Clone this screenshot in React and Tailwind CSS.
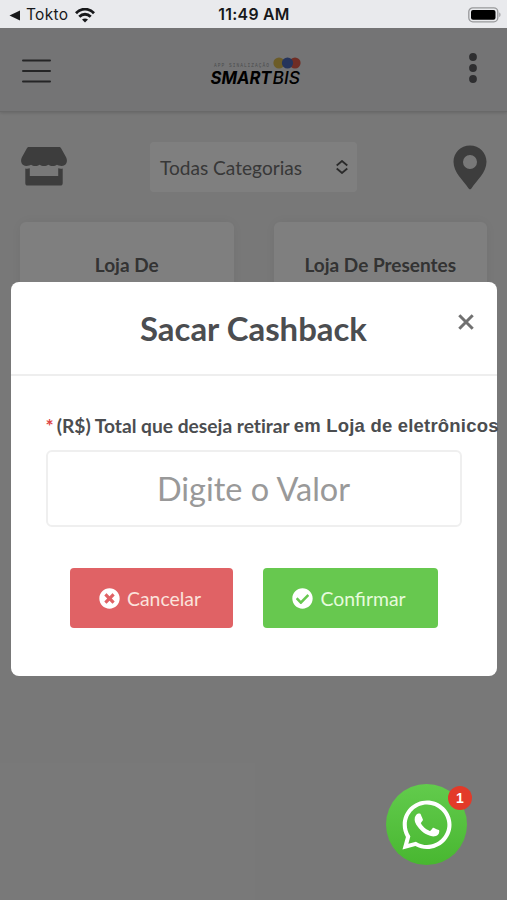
import { useState } from 'react';
import { FaCheckCircle, FaTimesCircle, FaWhatsapp } from 'react-icons/fa';

function StatusBar() {
  return (
    <div className="relative z-20 flex h-7 items-center bg-[#e9eaed] pt-0.5 font-['Inter',sans-serif] text-[#17181a]">
      <div className="flex flex-1 items-center pl-[9px]">
        <svg className="h-[11px] w-[11px]" viewBox="0 0 11 11">
          <path d="M0.5 5.5 11 0.5v10z" fill="#17181a" />
        </svg>
        <span className="ml-1.5 text-[15.5px] tracking-[0.3px]">Tokto</span>
        <svg className="ml-[7px] h-[15px] w-5" viewBox="0 0 20 15" fill="none" stroke="#17181a" strokeWidth="2.8">
          <path d="M1 5.2C6-0.2 14-0.2 19 5.2" />
          <path d="M4.3 8.8c3.3-3.4 8.1-3.4 11.4 0" />
          <path d="M10 14.6 7 11.6c1.7-1.6 4.3-1.6 6 0z" fill="#17181a" stroke="none" />
        </svg>
      </div>
      <span className="mr-0.5 text-[15.8px] font-semibold tracking-[0.3px]">11:49 AM</span>
      <div className="flex flex-1 justify-end pr-[6px]">
        <svg className="h-4 w-[33px]" viewBox="0 0 33 16">
          <rect x="0.8" y="0.8" width="29" height="14" rx="4" fill="none" stroke="#98999b" strokeWidth="1.3" />
          <rect x="3" y="3" width="24.5" height="9.8" rx="2" fill="#000" />
          <path d="M31.3 5.5v4.6c1.6-.5 1.6-4.1 0-4.6z" fill="#98999b" />
        </svg>
      </div>
    </div>
  );
}

function Logo() {
  return (
    <svg className="mt-1.5 mr-2 h-[38px] w-[92px] overflow-visible" viewBox="0 0 92 38">
      <text x="4" y="12.5" fontSize="4.5" fill="#98999b" fontFamily="Liberation Mono, monospace" textLength="55">APP SINALIZAÇÃO</text>
      <circle cx="69" cy="9" r="5.6" fill="#d8b850" />
      <circle cx="85" cy="9" r="5.6" fill="#e05a48" />
      <circle cx="77.500" cy="9" r="5.6" fill="#4a68b8" />
      <g fontFamily="Inter, sans-serif" fontStyle="italic" fontSize="17.5" fill="#000">
        <text x="0.5" y="30" fontWeight="700" textLength="61" lengthAdjust="spacingAndGlyphs">SMART</text>
        <text x="62.5" y="30" fontWeight="500" textLength="27.500" lengthAdjust="spacingAndGlyphs">BIS</text>
      </g>
    </svg>
  );
}

function StoreIcon() {
  return (
    <svg className="-mt-0.5 h-[39px] w-[46px]" viewBox="0 0 46 39" fill="#7a7a7a">
      <path d="M8 0h30c1 0 1.6.4 2.1 1.2l5 9c1 2 .9 4 .6 5-.6 2.500-2.700 3.800-5.200 3.800-2 0-3.300-.5-4.500-1.200-1.200.8-2.500 1.200-4.300 1.200s-3.100-.4-4.300-1.200C26.200 18.600 24.800 19 23 19s-3.200-.4-4.400-1.200c-1.200.8-2.500 1.200-4.300 1.200s-3.100-.4-4.300-1.200C8.800 18.500 7.500 19 5.500 19 3 19 .9 17.700.3 15.200c-.3-1-.4-3 .6-5l5-9C6.400.4 7 0 8 0z" />
      <path d="M4.300 21.500c1.500.3 3 .2 4.500-.2v7.700h28.400v-7.700c1.500.4 3 .5 4.500.2v14.700c0 1.400-.9 2.300-2.300 2.300H6.600c-1.400 0-2.300-.9-2.300-2.300z" />
    </svg>
  );
}

function PinIcon() {
  return (
    <svg className="h-[45px] w-[34px]" viewBox="0 0 34 45" fill="#7a7a7a">
      <path fillRule="evenodd" d="M17 .5C7.600.5.500 7.800.500 16.800.500 27.500 10 35 15.600 43.600c.7 1.100 2.100 1.100 2.800 0C24 35 33.500 27.500 33.500 16.800 33.500 7.800 26.400.5 17 .5zm0 9.500a7 7 0 1 1 0 14 7 7 0 0 1 0-14z" />
    </svg>
  );
}

function Store({ name }) {
  return (
    <div className="h-[260px] rounded-md bg-white pt-[29px] text-center text-[19px] font-bold text-[#666] shadow-[0_0_14px_rgba(0,0,0,0.06)]">
      {name}
    </div>
  );
}

function CashbackModal({ onClose }) {
  const [valor, setValor] = useState('');

  return (
    <div className="h-[394px] w-[486px] rounded-lg bg-white text-[#4b4d50]">
      <div className="relative flex h-[94px] items-center justify-center border-b-2 border-[#eeeeee]">
        <h2 className="pt-px text-[32.9px] font-bold">Sacar Cashback</h2>
        <button onClick={onClose} className="absolute top-[32px] right-[23px]">
          <svg className="h-4 w-4" viewBox="0 0 16 16" stroke="#707070" strokeWidth="3">
            <path d="M1.300 1.300l13.400 13.400M14.700 1.300 1.300 14.700" />
          </svg>
        </button>
      </div>
      <div className="px-[35px] pt-[38px]">
        <label className="flex h-6 items-center text-[19.2px] font-bold whitespace-nowrap [font-variant-ligatures:none]">
          <span className="mr-[3px] text-[#dd4545]">*</span>
          <span>(R$) Total que deseja retirar</span>
          <span className="ml-[4px] font-['Liberation_Sans',sans-serif] text-[18.500px] tracking-[0.2px]">em Loja de eletrônicos</span>
        </label>
        <input
          className="mt-[12px] block h-[77px] w-[416px] rounded-md border-2 border-[#efefef] text-center text-[32.5px] placeholder:text-[#999] focus:outline-none"
          placeholder="Digite o Valor"
          value={valor}
          onChange={e => setValor(e.target.value)}
        />
        <div className="mt-[41px] flex gap-[30px] pl-6">
          <button onClick={onClose} className="flex h-[60px] w-[163px] items-center justify-center gap-[7px] rounded bg-[#e06265] pt-px pr-0.5 text-[19.4px] text-[#fbe3dc]">
            <FaTimesCircle className="text-[21px] text-white" />
            Cancelar
          </button>
          <button className="flex h-[60px] w-[175px] items-center justify-center gap-[7px] rounded bg-[#67c84f] pt-px pr-0.5 text-[19.4px] text-[#e6fbdc]">
            <FaCheckCircle className="text-[21px] text-white" />
            Confirmar
          </button>
        </div>
      </div>
    </div>
  );
}

function App() {
  const [open, setOpen] = useState(true);

  return (
    <div className="relative h-[900px] w-[507px] overflow-hidden bg-[#f1f1f1] font-['Lato',sans-serif]">
      <StatusBar />

      <header className="flex h-[84px] items-center justify-between border-b border-[#d2d2d2] bg-[#e8e9eb] pr-[30px] pl-[22px] shadow-[0_1px_3px_rgba(0,0,0,0.15)]">
        <svg className="mt-0.5 h-6 w-[29px]" viewBox="0 0 29 24" stroke="#4a4a4d" strokeWidth="2" strokeLinecap="round">
          <path d="M1 1.500h27M1 12h27M1 22.500h27" />
        </svg>
        <Logo />
        <svg className="-mt-1 h-[30px] w-2" viewBox="0 0 8 30" fill="#5c5c60">
          <circle cx="4" cy="4" r="3.900" />
          <circle cx="4" cy="15" r="3.900" />
          <circle cx="4" cy="26" r="3.900" />
        </svg>
      </header>

      <div className="flex items-center justify-between pt-[30px] pr-5 pl-[21px]">
        <StoreIcon />
        <div className="mr-[13px] flex h-[50px] w-[207px] items-center justify-between rounded-sm bg-white pt-0.5 pr-[9px] pl-[10px] text-[19.1px] text-[#707070]">
          <span>Todas Categorias</span>
          <svg className="-mt-0.5 h-3.5 w-3" viewBox="0 0 12 14" fill="none" stroke="#555" strokeWidth="1.800">
            <path d="M.7 5.500 6 1l5.300 4.500M.7 8.500 6 13l5.300-4.500" />
          </svg>
        </div>
        <PinIcon />
      </div>

      <div className="grid grid-cols-2 gap-10 px-5 pt-[30px]">
        <Store name="Loja De" />
        <Store name="Loja De Presentes" />
      </div>

      <button className="absolute top-[784px] left-[386px] z-20 flex h-[81px] w-[81px] items-center justify-center rounded-full bg-gradient-to-b from-[#62cb4c] to-[#48b730]">
        <FaWhatsapp className="text-[56px] text-white" />
        <span className="absolute top-[2px] right-[-5px] flex h-6 w-6 items-center justify-center rounded-full bg-[#e33a29] font-['Liberation_Sans',sans-serif] text-[14px] font-bold text-white">
          1
        </span>
      </button>

      {open && (
        <div className="absolute inset-0 z-10 flex justify-center bg-black/50 pt-[282px]">
          <CashbackModal onClose={() => setOpen(false)} />
        </div>
      )}
    </div>
  );
}

export default App;
